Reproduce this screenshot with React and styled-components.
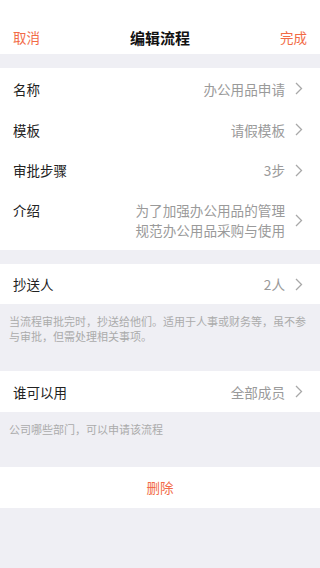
import React from "react";
import styled, { createGlobalStyle } from "styled-components";

const Global = createGlobalStyle`
  html, body { margin: 0; padding: 0; background: #efeff4; }
  body { font-family: "Noto Sans CJK SC", "Noto Sans", sans-serif; -webkit-font-smoothing: antialiased; }
  * { box-sizing: border-box; }
`;

const Page = styled.div`
  width: 320px;
  min-height: 568px;
  background: #efeff4;
  display: flex;
  flex-direction: column;
`;

const Header = styled.header`
  height: 54px;
  padding: 20px 13px 0;
  background: #fff;
  display: flex;
  align-items: center;
  justify-content: space-between;
`;

const NavButton = styled.span`
  font-size: 13.5px;
  color: #f26b47;
  width: 40px;
  text-align: ${(p) => (p.$right ? "right" : "left")};
`;

const Title = styled.h1`
  margin: 0;
  font-size: 15px;
  font-weight: 700;
  color: #111;
`;

const Group = styled.section`
  background: #fff;
  margin-top: ${(p) => p.$gap ?? 0}px;
  display: flex;
  flex-direction: column;
`;

const Row = styled.div`
  min-height: ${(p) => p.$h ?? 41}px;
  padding: 0 17px 0 13px;
  display: flex;
  align-items: ${(p) => (p.$top ? "flex-start" : "center")};
  padding-top: ${(p) => (p.$top ? 10 : 0)}px;
`;

const Label = styled.span`
  font-size: 13.5px;
  color: #222;
  flex-shrink: 0;
`;

const Value = styled.span`
  flex: 1;
  text-align: right;
  font-size: 13.6px;
  color: #9a9a9a;
  line-height: 20px;
  margin-right: 10px;
  white-space: pre-line;
`;

const ChevronWrap = styled.span`
  display: flex;
  align-items: center;
  align-self: center;
  margin-top: ${(p) => (p.$top ? -10 : 0)}px;
`;

const Note = styled.p`
  margin: 0;
  padding: 10px 9px 0;
  height: ${(p) => p.$h}px;
  font-size: 11px;
  line-height: 15px;
  color: #ababab;
`;

const DeleteRow = styled.div`
  height: 41px;
  background: #fff;
  display: flex;
  align-items: center;
  justify-content: center;
  font-size: 13.5px;
  color: #f26b47;
  padding-bottom: 2px;
`;

const Chevron = ({ top }) => (
  <ChevronWrap $top={top}>
    <svg width="8" height="13" viewBox="0 0 8 13">
      <path d="M1 1l5.5 5.5L1 12" fill="none" stroke="#a8a8a8" strokeWidth="1.3" />
    </svg>
  </ChevronWrap>
);

const Item = ({ label, value, h, top }) => (
  <Row $h={h} $top={top}>
    <Label>{label}</Label>
    <Value>{value}</Value>
    <Chevron top={top} />
  </Row>
);

export default function App() {
  return (
    <Page>
      <Global />
      <Header>
        <NavButton>取消</NavButton>
        <Title>编辑流程</Title>
        <NavButton $right>完成</NavButton>
      </Header>
      <Group $gap={14}>
        <Item label="名称" value="办公用品申请" h={41} />
        <Item label="模板" value="请假模板" h={41} />
        <Item label="审批步骤" value="3步" h={40} />
        <Item label="介绍" value={"为了加强办公用品的管理\n规范办公用品采购与使用"} h={60} top />
      </Group>
      <Group $gap={14}>
        <Item label="抄送人" value="2人" h={40} />
      </Group>
      <Note $h={67}>当流程审批完时，抄送给他们。适用于人事或财务等，虽不参与审批，但需处理相关事项。</Note>
      <Group>
        <Item label="谁可以用" value="全部成员" h={41} />
      </Group>
      <Note $h={55}>公司哪些部门，可以申请该流程</Note>
      <DeleteRow>删除</DeleteRow>
    </Page>
  );
}
